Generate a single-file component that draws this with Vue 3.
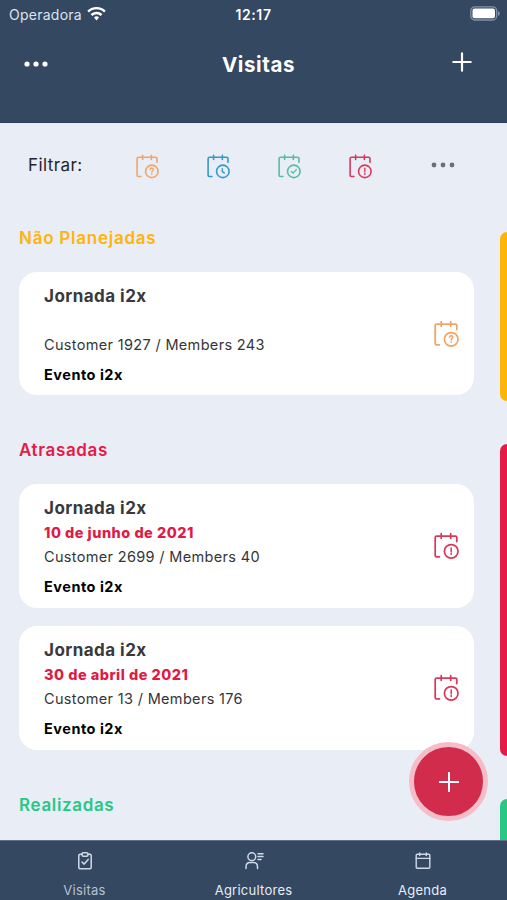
<script setup>
import { h } from 'vue'

const glyphs = {
  question: ['M15.7 15.7c.1-2.2 3.5-2 3.3.1-.1 1.300-1.600 1.300-1.600 2.700', 'M17.400 20.200v.6'],
  clock: ['M16.800 14.800v3.200l2.300 1.700'],
  check: ['M14.700 18l1.900 1.700 3.500-3.800'],
  alert: ['M17.400 14.400v4', 'M17.400 20.100v1']
}

const VisitIcon = (props) =>
  h('svg', { viewBox: '0 0 25 27', fill: 'none', stroke: 'currentColor', 'stroke-width': 1.75, 'stroke-linecap': 'round' }, [
    h('path', { d: 'M5.400 24.300H2.500Q1.200 24.300 1.200 23V5Q1.200 3.500 2.700 3.500H21.500Q22.800 3.500 22.800 4.800V9' }),
    h('path', { d: 'M7.200 1.200v4.600M16.700 1.200v4.600' }),
    h('circle', { cx: 17.2, cy: 18.8, r: 6.8 }),
    h('g', { transform: 'translate(-.2 1)', 'stroke-width': 1.5 }, glyphs[props.kind].map((d) => h('path', { d })))
  ])
VisitIcon.props = ['kind']

const filters = ['question', 'clock', 'check', 'alert']

const sections = [
  {
    title: 'Não Planejadas', tone: 'amber', kind: 'question',
    visits: [{ date: '', customer: 'Customer 1927 / Members 243' }]
  },
  {
    title: 'Atrasadas', tone: 'red', kind: 'alert',
    visits: [
      { date: '10 de junho de 2021', customer: 'Customer 2699 / Members 40' },
      { date: '30 de abril de 2021', customer: 'Customer 13 / Members 176' }
    ]
  },
  { title: 'Realizadas', tone: 'green', kind: 'check', visits: [] }
]
</script>

<template>
  <div class="screen">
    <header class="header">
      <div class="status">
        <div class="carrier">
          <span>Operadora</span>
          <svg class="wifi" viewBox="0 0 19 14" fill="currentColor">
            <path d="M9.500 0C5.900 0 2.600 1.400.3 3.700l1.600 1.800a10.800 10.800 0 0 1 15.200 0l1.600-1.800A13 13 0 0 0 9.500 0Z" />
            <path d="M9.500 4.700c-2.300 0-4.300.9-5.900 2.400l1.700 1.800a6.100 6.100 0 0 1 8.400 0l1.700-1.800a8.500 8.500 0 0 0-5.900-2.400Z" />
            <path d="M9.500 9.300c-1 0-1.800.4-2.500 1.100l2.500 3 2.500-3c-.7-.7-1.500-1.100-2.500-1.100Z" />
          </svg>
        </div>
        <span class="time">12:17</span>
        <svg class="battery" viewBox="0 0 30 15">
          <rect x=".8" y=".8" width="25.900" height="13.200" rx="4" fill="none" stroke="#8491a6" stroke-width="1.300" />
          <rect x="2.500" y="2.500" width="22.500" height="9.800" rx="2" fill="#fff" />
          <path d="M28 5v5q1.800-.8 1.800-2.500T28 5Z" fill="#8491a6" />
        </svg>
      </div>
      <div class="bar">
        <svg class="dots" viewBox="0 0 24 6" fill="#fff"><circle cx="3" cy="3" r="2.600" /><circle cx="12" cy="3" r="2.600" /><circle cx="21" cy="3" r="2.600" /></svg>
        <h1>Visitas</h1>
        <svg class="add" viewBox="0 0 20 20" stroke="#fff" stroke-width="2.200" stroke-linecap="round"><path d="M10 1.300v17.400M1.300 10h17.400" /></svg>
      </div>
    </header>

    <main class="content">
      <div class="filters">
        <span class="label">Filtrar:</span>
        <VisitIcon v-for="kind in filters" :key="kind" class="filter" :class="kind" :kind="kind" />
        <svg class="dots more" viewBox="0 0 24 6" fill="#6c6f77"><circle cx="3" cy="3" r="2.400" /><circle cx="12" cy="3" r="2.400" /><circle cx="21" cy="3" r="2.400" /></svg>
      </div>

      <section v-for="s in sections" :key="s.title" class="section" :class="s.tone">
        <div class="column">
          <h2>{{ s.title }}</h2>
          <article v-for="v in s.visits" :key="v.customer" class="card">
            <div class="info">
              <h3>Jornada i2x</h3>
              <p class="date">{{ v.date }}</p>
              <p class="customer">{{ v.customer }}</p>
              <p class="event">Evento i2x</p>
            </div>
            <VisitIcon class="state" :class="s.kind" :kind="s.kind" />
          </article>
        </div>
        <div class="strip"></div>
      </section>
    </main>

    <button class="fab" aria-label="+">
      <svg viewBox="0 0 20 20" stroke="#fff" stroke-width="2" stroke-linecap="round"><path d="M10 .8v18.400M.8 10h18.400" /></svg>
    </button>

    <nav class="tabs">
      <div class="tab current">
        <svg viewBox="0 0 20 20" fill="none" stroke="currentColor" stroke-width="1.500" stroke-linejoin="round" stroke-linecap="round">
          <path d="M7 3.300H5Q3.800 3.300 3.800 4.500V16.500Q3.800 17.700 5 17.700H15Q16.200 17.700 16.200 16.500V4.500Q16.200 3.300 15 3.300H13" />
          <rect x="7" y="1.700" width="6" height="3.500" rx="1.300" /><path d="M7 11l2.200 2.100 4-4.700" />
        </svg>
        <span>Visitas</span>
      </div>
      <div class="tab">
        <svg viewBox="0 0 20 20" fill="none" stroke="currentColor" stroke-width="1.500" stroke-linecap="round">
          <circle cx="7.800" cy="5.700" r="3.900" /><path d="M2 17.500V16Q2 11.500 6 11.500H9.500Q13.500 11.500 13.500 16V17.500M14 2.700H19M14 5.600H19M14 8.500H17" />
        </svg>
        <span>Agricultores</span>
      </div>
      <div class="tab">
        <svg viewBox="0 0 20 20" fill="none" stroke="currentColor" stroke-width="1.400" stroke-linecap="round">
          <rect x="3.200" y="3.300" width="13.600" height="14" rx="1" /><path d="M3.200 7.400H16.800M6.700 2v2.500M13.300 2v2.500" />
        </svg>
        <span>Agenda</span>
      </div>
    </nav>
  </div>
</template>

<style>
body { margin: 0; background: #e9edf5; }
</style>

<style scoped>
* { box-sizing: border-box; }
h1, h2, h3, p { margin: 0; white-space: nowrap; }
svg { display: block; flex: none; }
.screen {
  position: relative;
  width: 507px;
  height: 900px;
  display: flex;
  flex-direction: column;
  overflow: hidden;
  background: #e9edf5;
  font-family: Inter, "Liberation Sans", sans-serif;
}
.header { flex: none; height: 123px; background: #344862; color: #fff; border-bottom: 1px solid #2d405b; }
.status { display: grid; grid-template-columns: 1fr auto 1fr; align-items: center; height: 28px; padding: 0 8px 0 8px; }
.carrier { display: flex; align-items: center; gap: 5.500px; padding-left: 1px; font-size: 14px; letter-spacing: .25px; color: #dce3ed; }
.wifi { width: 19px; height: 14px; color: #fff; margin-top: -1px; }
.time { font-size: 14px; font-weight: 600; letter-spacing: .6px; }
.battery { width: 30px; height: 15px; justify-self: end; margin: -2px -1px 0 0; }
.bar { display: grid; grid-template-columns: 1fr auto 1fr; align-items: center; height: 72px; padding: 0 24px; }
.dots { width: 24px; height: 6px; }
.bar h1 { font-size: 20.500px; font-weight: 700; letter-spacing: .6px; line-height: 24px; margin: 1px 0 0 10px; }
.add { width: 20px; height: 20px; justify-self: end; margin: -5px 11px 0 0; }
.content { flex: 1; min-height: 0; overflow: hidden; }
.filters { display: flex; align-items: center; height: 84px; padding-left: 28px; margin-bottom: 25px; }
.label { width: 107.500px; margin-top: -1px; font-size: 17px; letter-spacing: .4px; color: #24262b; }
.filter { width: 23px; height: 25px; margin-right: 48px; margin-top: 2px; }
.more { margin-left: 11px; }
.question { color: #f1a566; }
.clock { color: #349acb; }
.check { color: #55bda5; }
.alert { color: #d93a59; }
.section { display: grid; grid-template-columns: 455px 7px; column-gap: 26px; padding-left: 19px; margin-bottom: 43px; }
.amber { --tone: #ffb40a; }
.red { --tone: #e51a46; }
.green { --tone: #27c785; }
.column { padding-bottom: 6px; display: flex; flex-direction: column; gap: 18.500px; }
.section h2 { height: 21.500px; line-height: 12px; font-size: 17px; font-weight: 600; letter-spacing: .65px; color: var(--tone); }
.amber h2 { letter-spacing: .75px; }
.strip { background: var(--tone); border-radius: 9px 0 0 9px; }
.green .strip { height: 90px; }
.card { display: flex; justify-content: space-between; height: 123.500px; padding: 12px 15px 0 25px; border-radius: 18px; background: #fff; }
.amber .card { height: 123px; padding-top: 11.500px; }
.info { display: flex; flex-direction: column; }
.info h3 { font-size: 17px; line-height: 24px; font-weight: 700; letter-spacing: .45px; color: #38393c; }
.date { height: 25px; line-height: 26px; font-size: 14.500px; font-weight: 800; letter-spacing: .48px; color: #df1b45; }
.customer { height: 30px; line-height: 24px; font-size: 14.500px; letter-spacing: .33px; color: #343538; }
.event { line-height: 24px; font-size: 14.500px; font-weight: 700; letter-spacing: .5px; color: #000; }
.state { width: 25px; height: 28px; margin-top: 36px; }
.fab {
  position: absolute;
  left: 409px;
  top: 742px;
  width: 79px;
  height: 79px;
  display: grid;
  place-items: center;
  padding: 0;
  border: 5px solid #f5bdc8;
  border-radius: 50%;
  background: #d12c4b;
}
.fab svg { width: 20px; height: 20px; }
.tabs { flex: none; display: grid; grid-template-columns: repeat(3, 1fr); height: 60px; background: #344862; border-top: 1px solid #5c6e87; color: #e6edf7; }
.tab { display: flex; flex-direction: column; align-items: center; padding-top: 10px; }
.tab svg { width: 20px; height: 20px; color: #cedae8; }
.tab span { margin-top: 10px; font-size: 13px; line-height: 18px; letter-spacing: .25px; }
.current { color: #b4c2d3; }
</style>
